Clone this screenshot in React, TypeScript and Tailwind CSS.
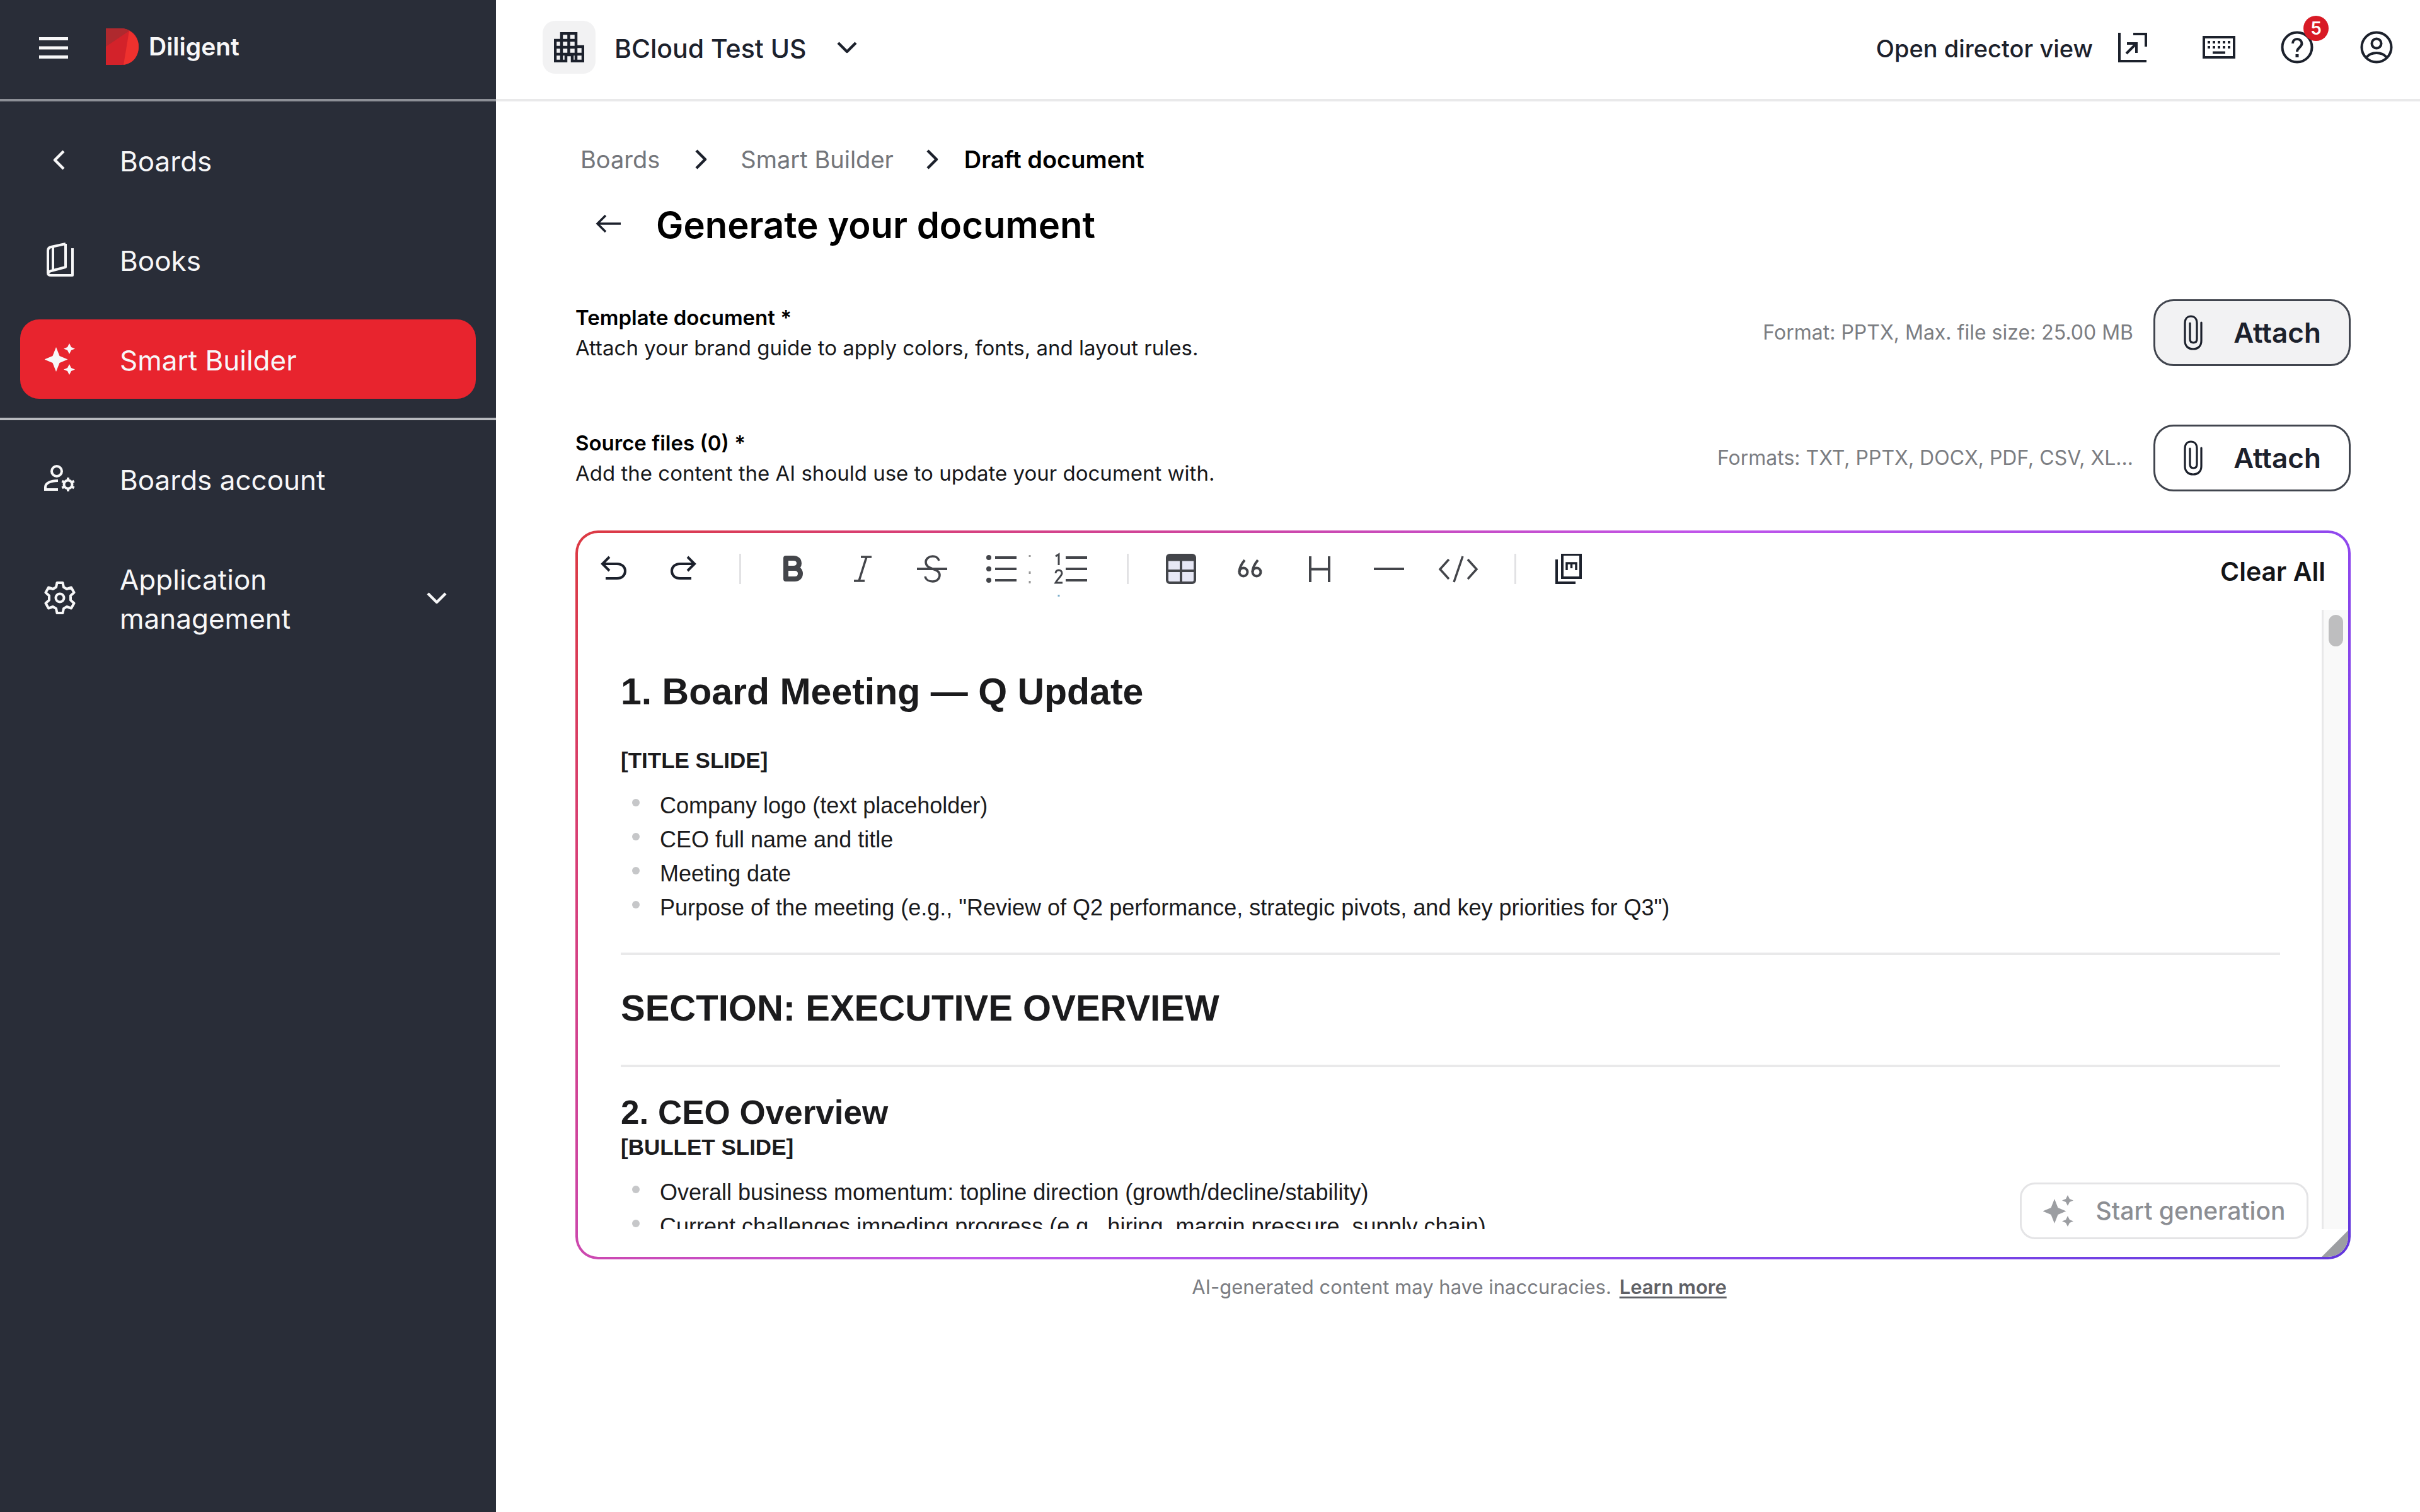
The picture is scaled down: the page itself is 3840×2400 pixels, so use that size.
import React, { useState } from 'react';

interface IconProps {
    className?: string;
}

/* ---------- Icons ---------- */

const MenuIcon: React.FC<IconProps> = ({ className }) => (
    <svg viewBox="0 0 46 36" className={className} fill="none" stroke="currentColor" strokeWidth="5">
        <path d="M0 3.5h46M0 18h46M0 32.5h46" />
    </svg>
);

const DiligentMark: React.FC<IconProps> = ({ className }) => (
    <svg viewBox="0 0 52 58" className={className}>
        <path d="M0 0h25c17 1 27 14 27 29s-10 28-27 29H0z" fill="#d3222a" />
        <path d="M0 0h25c5 0 9 1 12 4L0 29z" fill="#af292e" />
        <path d="M37 4c9 5 15 14 15 25 0 15-9 27-24 29z" fill="#ee312e" />
    </svg>
);

const ChevronIcon: React.FC<IconProps & { dir: 'left' | 'right' | 'down' }> = ({ className, dir }) => {
    const paths = { left: 'M15 5l-7 7 7 7', right: 'M9 5l7 7-7 7', down: 'M5 8.5l7 7 7-7' };
    return (
        <svg viewBox="0 0 24 24" className={className} fill="none" stroke="currentColor" strokeWidth="2.2" strokeLinejoin="round">
            <path d={paths[dir]} />
        </svg>
    );
};

const BooksIcon: React.FC<IconProps> = ({ className }) => (
    <svg viewBox="0 0 44 56" className={className} fill="none" stroke="currentColor" strokeWidth="4" strokeLinejoin="round">
        <path d="M31 3L8 8c-4 1-5 3-5 6v35c0 3 2 4 5 4h34V10M31 3v37L8 46c-3 1-5 2-5 4M11 8v37" />
    </svg>
);

const SparkleIcon: React.FC<IconProps> = ({ className }) => (
    <svg viewBox="0 0 48 50" className={className} fill="currentColor">
        <path d="M18 6l5.500 14 13 5.500-13 5.500-5.500 14-5.500-14-13-5.500 13-5.500z" />
        <path d="M39 0l3 6 6 2.500-6 2.500-3 6-3-6-6-2.500 6-2.500z" />
        <path d="M39 33l3 6 6 2.500-6 2.500-3 6-3-6-6-2.500 6-2.500z" />
    </svg>
);

const AccountGearIcon: React.FC<IconProps> = ({ className }) => (
    <svg viewBox="0 0 50 44" className={className} fill="none" stroke="currentColor" strokeWidth="4">
        <circle cx="20" cy="10" r="8" />
        <path d="M22 39H2v-4c0-6 8-10 20-10" />
        <circle cx="38" cy="31" r="6.500" />
        <path d="M38 20v5M38 37v5M28.500 25.500l4 2.500M43.500 34l4 2.500M28.500 36.500l4-2.500M43.500 28l4-2.500" />
    </svg>
);

const GearIcon: React.FC<IconProps> = ({ className }) => (
    <svg viewBox="0 0 50 52" className={className} fill="none" stroke="currentColor" strokeWidth="4" strokeLinejoin="round">
        <path d="M20.500 2h9l1.500 7 5 3 7-2.500 4.500 8-5.500 5v7l5.500 5-4.500 8-7-2.500-5 3-1.500 7h-9l-1.500-7-5-3-7 2.500-4.500-8 5.500-5v-7l-5.500-5 4.500-8 7 2.500 5-3z" />
        <circle cx="25" cy="26" r="6.500" />
    </svg>
);

const BuildingIcon: React.FC<IconProps> = ({ className }) => (
    <svg viewBox="0 0 48 48" className={className} fill="none" stroke="currentColor" strokeWidth="4.500">
        <path d="M12 13V2h23v21M12 13H2v33h17V36h10v10h17V23H35M12 13v33M23.500 2v34M35 23v23M2 24h33M2 35h44M12 13h23" />
    </svg>
);

const OpenViewIcon: React.FC<IconProps> = ({ className }) => (
    <svg viewBox="0 0 46 48" className={className} fill="none" stroke="currentColor" strokeWidth="4">
        <path d="M2 1v45h43M24 3h20v20M13 34l15-15M14 18h15v15" />
    </svg>
);

const KeyboardIcon: React.FC<IconProps> = ({ className }) => (
    <svg viewBox="0 0 52 36" className={className} fill="none" stroke="currentColor" strokeWidth="4">
        <path d="M2 2h48v32H2z" />
        <path d="M8 10h37M8 18h37" strokeDasharray="4 4" />
        <path d="M16 26.500h20" />
    </svg>
);

const HelpIcon: React.FC<IconProps> = ({ className }) => (
    <svg viewBox="0 0 52 52" className={className} fill="none" stroke="currentColor" strokeWidth="4">
        <circle cx="26" cy="26" r="23.500" />
        <path d="M19 20c0-4 3-7 7-7s7.500 3 7.500 7c0 6-7.500 6.500-7.500 13" />
        <path d="M26 37v5" strokeWidth="5" />
    </svg>
);

const ProfileIcon: React.FC<IconProps> = ({ className }) => (
    <svg viewBox="0 0 52 52" className={className} fill="none" stroke="currentColor" strokeWidth="4">
        <circle cx="26" cy="26" r="23.500" />
        <circle cx="26" cy="20" r="7.500" />
        <path d="M10 42c4-5 10-7 16-7s12 2 16 7" />
    </svg>
);

const ArrowLeftIcon: React.FC<IconProps> = ({ className }) => (
    <svg viewBox="0 0 40 30" className={className} fill="none" stroke="currentColor" strokeWidth="3.500">
        <path d="M40 15H3M16 2L3 15l13 13" />
    </svg>
);

const ClipIcon: React.FC<IconProps> = ({ className }) => (
    <svg viewBox="0 0 32 56" className={className} fill="none" stroke="currentColor" strokeWidth="3.200" strokeLinecap="round">
        <path d="M29 12v29c0 8-5 13-13 13S3 49 3 41V13C3 6 7 2 12.500 2S22 6 22 13v25c0 4-2 6-5.500 6S11 42 11 38V13" />
    </svg>
);

const UndoIcon: React.FC<IconProps> = ({ className }) => (
    <svg viewBox="0 0 48 48" className={className} fill="none" stroke="currentColor" strokeWidth="4">
        <path d="M17 5L6 16l11 11M6 16h23c8 0 13 5 13 11.500S37 39 29 39H11" />
    </svg>
);

const BoldIcon: React.FC<IconProps> = ({ className }) => (
    <svg viewBox="0 0 48 48" className={className} fill="none" stroke="currentColor" strokeWidth="8" strokeLinejoin="round">
        <path d="M12 7h12c5 0 9 3 9 8s-4 8-9 8H12zM12 23h14c5 0 9 3 9 8.500S31 40 26 40H12z" />
    </svg>
);

const ItalicIcon: React.FC<IconProps> = ({ className }) => (
    <svg viewBox="0 0 48 48" className={className} fill="none" stroke="currentColor" strokeWidth="3.500">
        <path d="M21 5h17M10 43h17M30 5L18 43" />
    </svg>
);

const StrikeIcon: React.FC<IconProps> = ({ className }) => (
    <svg viewBox="0 0 48 48" className={className} fill="none" stroke="currentColor" strokeWidth="3.500">
        <path d="M35 11c-1-4-5-7-10-7-6 0-11 4-11 9 0 7 6 9 11 11 6 2 11 4 11 10s-5 10-11 10-11-3-12-8" />
        <path d="M0 24h48" strokeWidth="4" />
    </svg>
);

const BulletListIcon: React.FC<IconProps> = ({ className }) => (
    <svg viewBox="0 0 48 48" className={className} overflow="visible">
        <path d="M14 6h34M14 24h34M14 42h34" stroke="currentColor" strokeWidth="4" />
        <g fill="currentColor">
            <circle cx="4" cy="6" r="4" />
            <circle cx="4" cy="24" r="4" />
            <circle cx="4" cy="42" r="4" />
        </g>
        <path d="M69 2v3M69 28v4M69 43v4" stroke="#999999" strokeWidth="3" />
    </svg>
);

const NumberListIcon: React.FC<IconProps> = ({ className }) => (
    <svg viewBox="0 0 52 48" className={className} fill="none" stroke="currentColor" overflow="visible">
        <path d="M18 6h34M18 24h34M18 42h34" strokeWidth="4" />
        <path d="M2 4l5-3v17M2 31c0-3 2-5 5-5s5 2 5 5c0 4-7 9-10 15h11" strokeWidth="3" />
        <path d="M7 65v3" stroke="#7fb0cc" strokeWidth="3" />
    </svg>
);

const TableIcon: React.FC<IconProps> = ({ className }) => (
    <svg viewBox="0 0 48 48" className={className} fill="none" stroke="currentColor" strokeWidth="4">
        <rect x="2" y="2" width="44" height="44" rx="4" fill="#e6e7f5" />
        <path d="M3 7h42" strokeWidth="9" />
        <path d="M24 8v38M2 27h44" />
    </svg>
);

const QuoteIcon: React.FC<IconProps> = ({ className }) => (
    <svg viewBox="0 0 48 48" className={className} fill="none" stroke="currentColor" strokeWidth="4">
        <circle cx="13" cy="29" r="6.500" />
        <circle cx="34" cy="29" r="6.500" />
        <path d="M15 10C10 16 6.500 22 6.500 29M36 10c-5 6-8.500 12-8.500 19" />
    </svg>
);

const HeadingIcon: React.FC<IconProps> = ({ className }) => (
    <svg viewBox="0 0 48 48" className={className} fill="none" stroke="currentColor" strokeWidth="4">
        <path d="M9 4v41M39 4v41M9 24.500h30" />
    </svg>
);

const RuleIcon: React.FC<IconProps> = ({ className }) => (
    <svg viewBox="0 0 48 48" className={className} fill="none" stroke="currentColor" strokeWidth="4">
        <path d="M0 24h48" />
    </svg>
);

const CodeIcon: React.FC<IconProps> = ({ className }) => (
    <svg viewBox="0 0 64 48" className={className} fill="none" stroke="currentColor" strokeWidth="3.500">
        <path d="M17 9L3 24.500 17 40M47 9l14 15.500L47 40M39 4L25 45" />
    </svg>
);

const MarkdownIcon: React.FC<IconProps> = ({ className }) => (
    <svg viewBox="0 0 48 48" className={className} fill="none" stroke="currentColor" strokeWidth="4">
        <path d="M14 1h29v37H14zM5 9v37h30" />
        <path d="M21 26V15h15v11M28.500 15v8" strokeWidth="3.500" />
    </svg>
);

/* ---------- Data ---------- */

const titleSlide = [
    'Company logo (text placeholder)',
    'CEO full name and title',
    'Meeting date',
    'Purpose of the meeting (e.g., "Review of Q2 performance, strategic pivots, and key priorities for Q3")',
];

const bulletSlide = [
    'Overall business momentum: topline direction (growth/decline/stability)',
    'Current challenges impeding progress (e.g., hiring, margin pressure, supply chain)',
];

const toolGroups = [
    [
        { label: 'Bold', icon: BoldIcon },
        { label: 'Italic', icon: ItalicIcon },
        { label: 'Strikethrough', icon: StrikeIcon },
        { label: 'Bulleted list', icon: BulletListIcon },
        { label: 'Numbered list', icon: NumberListIcon },
    ],
    [
        { label: 'Table', icon: TableIcon },
        { label: 'Quote', icon: QuoteIcon },
        { label: 'Heading', icon: HeadingIcon },
        { label: 'Horizontal rule', icon: RuleIcon },
        { label: 'Code', icon: CodeIcon },
    ],
];

/* ---------- Sidebar ---------- */

interface NavItemProps {
    icon: React.ReactNode;
    label: string;
    active?: boolean;
}

const NavItem: React.FC<NavItemProps> = ({ icon, label, active }) => (
    <a
        href="#"
        aria-current={active ? 'page' : undefined}
        className={`flex items-center rounded-[30px] py-[30px] pl-8 text-[44px] leading-[62px] ${active ? 'bg-[#e8242e]' : ''}`}
    >
        <span className="flex w-[62px] justify-center">{icon}</span>
        <span className="ml-16 pt-1">{label}</span>
    </a>
);

const Sidebar = () => (
    <aside className="flex w-[787px] shrink-0 flex-col bg-[#292d38] text-[#f7f7f8]">
        <div className="flex h-[161px] items-center border-b-4 border-[#8d9097] pb-2.5 pl-[62px]">
            <button aria-label="Toggle menu" className="pt-1">
                <MenuIcon className="h-9 w-[46px]" />
            </button>
            <DiligentMark className="ml-[60px] h-[58px] w-[52px]" />
            <span className="ml-4 text-[39px] font-semibold leading-[50px]">Diligent</span>
        </div>
        <nav className="flex flex-col gap-8 border-b-4 border-[#b7b9be] px-8 py-[30px]">
            <NavItem label="Boards" icon={<ChevronIcon dir="left" className="size-12" />} />
            <NavItem label="Books" icon={<BooksIcon className="h-14 w-11" />} />
            <NavItem label="Smart Builder" icon={<SparkleIcon className="h-[50px] w-12" />} active />
        </nav>
        <nav className="flex flex-col gap-8 px-8 py-[30px]">
            <NavItem label="Boards account" icon={<AccountGearIcon className="h-11 w-[50px]" />} />
            <button className="flex items-center py-[30px] pl-8 pr-[38px] text-left text-[44px] leading-[62px]">
                <span className="flex w-[62px] justify-center">
                    <GearIcon className="h-[52px] w-[50px]" />
                </span>
                <span className="ml-16 w-[400px] pt-1">Application management</span>
                <ChevronIcon dir="down" className="ml-auto size-12" />
            </button>
        </nav>
    </aside>
);

/* ---------- Main column ---------- */

const TopBar = () => (
    <header className="flex h-[161px] items-center border-b-4 border-[#e9e9ea] pb-2 pl-[74px] pr-[43px] text-[#1c212c]">
        <div className="flex size-[84px] items-center justify-center rounded-[20px] bg-[#f2f2f3]">
            <BuildingIcon className="size-12" />
        </div>
        <div className="relative ml-[30px] flex items-center">
            <select aria-label="Site" className="appearance-none bg-transparent pr-[88px] pt-1 text-[41px] font-medium leading-[50px]">
                <option>BCloud Test US</option>
            </select>
            <ChevronIcon dir="down" className="pointer-events-none absolute right-0 size-12" />
        </div>
        <a href="#" className="ml-auto flex items-center gap-10 text-[38px] font-medium leading-[50px]">
            <span className="pt-1">Open director view</span>
            <OpenViewIcon className="h-12 w-[46px]" />
        </a>
        <button aria-label="Keyboard shortcuts" className="ml-[88px]">
            <KeyboardIcon className="h-9 w-[52px]" />
        </button>
        <button aria-label="Help" className="relative ml-[72px]">
            <HelpIcon className="size-[52px]" />
            <span className="absolute -right-6 -top-[24px] flex size-10 items-center justify-center rounded-full bg-[#d81a25] text-[28px] font-semibold leading-8 text-white">
                5
            </span>
        </button>
        <button aria-label="Profile" className="ml-[74px]">
            <ProfileIcon className="size-[52px]" />
        </button>
    </header>
);

interface AttachRowProps {
    title: string;
    description: string;
    hint: string;
    filled?: boolean;
}

const AttachRow: React.FC<AttachRowProps> = ({ title, description, hint, filled }) => (
    <div className="flex items-center">
        <div className="text-[33px] leading-12 text-[#17181b]">
            <h2 className="font-semibold text-black">{title}</h2>
            <p>{description}</p>
        </div>
        <span className="ml-auto text-[32px] leading-12 text-[#7b7d82]">{hint}</span>
        <button
            className={`ml-8 flex h-[106px] w-[313px] items-center justify-center gap-12 rounded-[32px] border-[3px] border-[#41454e] text-[44px] font-semibold leading-[60px] text-[#1c212c] ${filled ? 'bg-[#f2f2f3]' : 'bg-white'}`}
        >
            <ClipIcon className="h-14 w-8" />
            Attach
        </button>
    </div>
);

const ToolButton: React.FC<{ label: string; children: React.ReactNode }> = ({ label, children }) => (
    <button aria-label={label} className="flex h-14 w-[110px] items-center justify-center">
        {children}
    </button>
);

const Divider = () => <span className="ml-[34px] mr-7 h-12 w-[3px] bg-[#e2e2e4]" />;

const BulletList: React.FC<{ items: string[] }> = ({ items }) => (
    <ul className="mt-[18px] pl-[18px] text-[36px] leading-[54px]">
        {items.map((item) => (
            <li key={item} className="flex items-start">
                <span className="mt-4 size-3 rounded-full bg-[#c6c7c9]" />
                <span className="ml-8">{item}</span>
            </li>
        ))}
    </ul>
);

const Editor = () => {
    const [cleared, setCleared] = useState(false);

    return (
        <div className="mt-[62px] rounded-[36px] bg-[linear-gradient(135deg,#dc3a42_0%,#d8407a_14%,#cf459f_25%,#c055ea_45%,#9148ee_70%,#6f40e2_92%,#6236dc_100%)] p-1">
            <div className="relative overflow-hidden rounded-[32px] bg-white pb-11">
                <div className="flex h-[122px] items-center pb-2 pl-0.5 pr-9 text-[#43454a]">
                    <div className="flex items-center text-[#1c212c]">
                        <ToolButton label="Undo">
                            <UndoIcon className="size-12" />
                        </ToolButton>
                        <ToolButton label="Redo">
                            <UndoIcon className="size-12 -scale-x-100" />
                        </ToolButton>
                    </div>
                    {toolGroups.map((group, i) => (
                        <React.Fragment key={i}>
                            <Divider />
                            {group.map(({ label, icon: Icon }) => (
                                <ToolButton key={label} label={label}>
                                    <Icon className="h-12" />
                                </ToolButton>
                            ))}
                        </React.Fragment>
                    ))}
                    <Divider />
                    <div className="text-[#1c212c]">
                        <ToolButton label="Markdown">
                            <MarkdownIcon className="size-12" />
                        </ToolButton>
                    </div>
                    <button onClick={() => setCleared(true)} className="ml-auto pt-2 text-[41px] font-semibold leading-[50px] text-[#131417]">
                        Clear All
                    </button>
                </div>

                <div className="flex h-[983px]">
                    <div className="min-w-0 flex-1 overflow-hidden pl-[68px] pr-[66px] font-['Liberation_Sans',Arial,sans-serif] text-[#1b1b1d]">
                        {!cleared && (
                            <article>
                                <h2 className="mt-24 text-[59px] font-bold leading-[68px]">1. Board Meeting — Q Update</h2>
                                <p className="mt-12 text-[35px] font-bold leading-[54px]">[TITLE SLIDE]</p>
                                <BulletList items={titleSlide} />
                                <hr className="mt-11 border-t-4 border-[#e9e9ea]" />
                                <h2 className="mt-12 text-[58px] font-bold leading-[72px]">SECTION: EXECUTIVE OVERVIEW</h2>
                                <hr className="mt-[54px] border-t-4 border-[#e9e9ea]" />
                                <h3 className="mt-11 text-[53px] font-bold leading-[56px]">2. CEO Overview</h3>
                                <p className="text-[35px] font-bold leading-[54px]">[BULLET SLIDE]</p>
                                <BulletList items={bulletSlide} />
                            </article>
                        )}
                    </div>
                    <div className="w-[42px] border-l-[3px] border-[#e8e8e9] bg-[#f9f9f9] px-2 py-2">
                        <div className="h-[50px] w-[23px] rounded-full bg-[#bebebf]" />
                    </div>
                </div>

                <button className="absolute bottom-7 right-[63px] flex h-[90px] w-[458px] items-center justify-center gap-9 rounded-[24px] border-[3px] border-[#e4e4e6] bg-white text-[39px] font-medium leading-[50px] text-[#8c8e93]">
                    <SparkleIcon className="h-[50px] w-12 text-[#9c9ea2]" />
                    Start generation
                </button>
                <svg viewBox="0 0 42 42" className="absolute bottom-0 right-0 size-[42px]" fill="#9c9ea2">
                    <path d="M42 0v42H0z" />
                </svg>
            </div>
        </div>
    );
};

export default function App() {
    return (
        <div className="flex min-h-screen bg-white font-['Inter','Open_Sans',sans-serif]">
            <Sidebar />
            <div className="flex min-w-0 flex-1 flex-col">
                <TopBar />
                <main className="pb-16 pl-[126px] pr-[110px] pt-[68px]">
                    <nav aria-label="Breadcrumb" className="flex items-center pl-2 text-[38px] leading-12 text-[#74767b]">
                        <a href="#">Boards</a>
                        <ChevronIcon dir="right" className="mx-10 size-12 text-[#1c212c]" />
                        <a href="#">Smart Builder</a>
                        <ChevronIcon dir="right" className="ml-9 mr-7 size-12 text-[#1c212c]" />
                        <span className="font-semibold text-black">Draft document</span>
                    </nav>
                    <div className="mt-11 flex items-center pl-8">
                        <button aria-label="Back" className="pb-1">
                            <ArrowLeftIcon className="h-[30px] w-10 text-[#1c212c]" />
                        </button>
                        <h1 className="ml-14 text-[58px] font-semibold leading-[72px] text-black">Generate your document</h1>
                    </div>
                    <div className="mt-[82px] flex flex-col gap-[93px]">
                        <AttachRow
                            title="Template document *"
                            description="Attach your brand guide to apply colors, fonts, and layout rules."
                            hint="Format: PPTX, Max. file size: 25.00 MB"
                            filled
                        />
                        <AttachRow
                            title="Source files (0) *"
                            description="Add the content the AI should use to update your document with."
                            hint="Formats: TXT, PPTX, DOCX, PDF, CSV, XL…"
                        />
                    </div>
                    <Editor />
                    <p className="mt-6 pr-3 text-center text-[31px] leading-10 text-[#7b7d82]">
                        AI-generated content may have inaccuracies.{' '}
                        <a href="#" className="ml-1 font-semibold text-[#5f6166] underline underline-offset-4">
                            Learn more
                        </a>
                    </p>
                </main>
            </div>
        </div>
    );
}
